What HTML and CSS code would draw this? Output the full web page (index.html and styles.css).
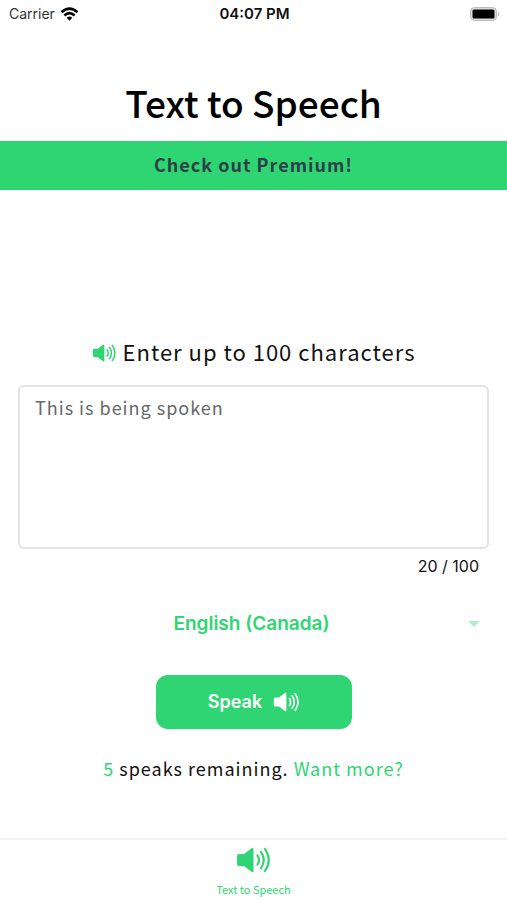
FILE: index.html
```html
<!DOCTYPE html>
<html lang="en">
<head>
<meta charset="utf-8">
<meta name="viewport" content="width=device-width, initial-scale=1">
<title>Text to Speech</title>
<link rel="stylesheet" href="styles.css">
</head>
<body>
<svg class="sprite" aria-hidden="true">
  <symbol id="speaker" viewBox="0 0 34 26">
    <path fill="currentColor" d="M3 7h5L15.500 1.200Q17.500 0 17.500 2.500v21Q17.500 26 15.500 24.800L8 19H3Q1 19 1 17v-8Q1 7 3 7z"/>
    <path fill="none" stroke="currentColor" stroke-width="2.200" stroke-linecap="round" d="M21.500 8.500q3 4.500 0 9M25 5q5.500 8 0 16M29 2q7.500 11 0 22"/>
  </symbol>
</svg>
<div class="app">
  <header class="status">
    <span class="carrier">Carrier
      <svg class="wifi" viewBox="0 0 18 14" aria-hidden="true">
        <path fill="none" stroke="#000" stroke-width="2.600" d="M1 5.200q8-7 16 0M3.900 8.400q5.100-4.400 10.200 0"/>
        <path d="M6.200 10.800q2.800-2.400 5.600 0L9 13.800z"/>
      </svg>
    </span>
    <span class="clock">04:07 PM</span>
    <svg class="battery" viewBox="0 0 30 14" aria-hidden="true">
      <rect x="0.500" y="0.500" width="26" height="13" rx="4" fill="#ddd" stroke="#bbb"/>
      <rect x="2.500" y="2.500" width="22" height="9" rx="1.500"/>
      <path fill="#bbb" d="M28 4.500q3 2.500 0 5z"/>
    </svg>
  </header>
  <h1 class="title">Text to Speech</h1>
  <a class="banner" href="#premium">Check out Premium!</a>
  <main class="content">
    <label class="prompt" for="message"><svg class="prompt-icon" aria-hidden="true"><use href="#speaker"/></svg>Enter up to 100 characters</label>
    <textarea class="message" id="message" maxlength="100" placeholder="This is being spoken"></textarea>
    <p class="count">20 / 100</p>
    <div class="language">
      <select class="language-select" aria-label="Language"><option>English (Canada)</option></select>
    </div>
    <button class="speak" type="button">Speak <svg class="speak-icon" aria-hidden="true"><use href="#speaker"/></svg></button>
    <p class="remaining"><span class="accent">5</span> speaks remaining. <a class="accent" href="#more">Want more?</a></p>
  </main>
  <nav class="tabs">
    <a class="tab" href="#tts"><svg class="tab-icon" aria-hidden="true"><use href="#speaker"/></svg>Text to Speech</a>
  </nav>
</div>
</body>
</html>
```

FILE: styles.css
```css
* { box-sizing: border-box; }

body {
  margin: 0;
  background: #fff;
  color: #111;
  font-family: "Noto Sans CJK SC", sans-serif;
}

.sprite { position: absolute; width: 0; height: 0; }

.app {
  display: flex;
  flex-direction: column;
  min-height: 100vh;
}

.status {
  display: grid;
  grid-template-columns: 1fr auto 1fr;
  align-items: center;
  height: 28px;
  padding: 0 7px 0 9px;
  font: 15px/20px Inter, sans-serif;
}

.carrier {
  display: flex;
  align-items: center;
  gap: 5px;
  color: #333;
  font-size: 14px;
}

.wifi { width: 19px; height: 14px; }
.clock { font-weight: 600; }
.battery { width: 30px; height: 14px; justify-self: end; }

.title {
  margin: 44px 0 9px;
  font-size: 37px;
  line-height: 60px;
  font-weight: 500;
  text-align: center;
  color: #000;
}

.banner {
  padding: 11px 12px 13px;
  background: #2fd573;
  color: #2b4147;
  font-size: 18px;
  line-height: 25px;
  font-weight: 700;
  letter-spacing: 1px;
  text-align: center;
  text-decoration: none;
}

.content {
  display: flex;
  flex: 1;
  flex-direction: column;
  align-items: center;
  padding: 143px 18px 0;
}

.prompt {
  display: flex;
  align-items: center;
  gap: 7px;
  font-size: 22px;
  line-height: 36px;
  letter-spacing: 1px;
}

.prompt-icon { width: 24px; height: 18px; margin-top: 4px; color: #2fd573; }

.message {
  display: block;
  width: 100%;
  height: 164px;
  margin-top: 16px;
  padding: 7px 15px;
  border: 2px solid #e2e3e4;
  border-radius: 6px;
  background: #fff;
  font: 18px/27px "Noto Sans CJK SC", sans-serif;
  letter-spacing: 1px;
  resize: none;
}

.message::placeholder { color: #66696c; opacity: 1; }

.count {
  align-self: flex-end;
  margin: 6px 10px 0;
  font: 16px/22px Inter, sans-serif;
}

.language {
  position: relative;
  width: 100%;
  margin-top: 32px;
}

.language::after {
  content: "";
  position: absolute;
  top: 12px;
  right: 9px;
  border: 6px solid transparent;
  border-top-color: #aeebc9;
  border-bottom: 0;
  pointer-events: none;
}

.language-select {
  width: 100%;
  height: 30px;
  padding: 0 4px 0 0;
  border: 0;
  appearance: none;
  background: transparent;
  color: #2fd573;
  font: 600 19px/30px Inter, sans-serif;
  text-align: center;
  text-align-last: center;
}

.speak {
  display: flex;
  align-items: center;
  justify-content: center;
  gap: 11px;
  width: 196px;
  height: 54px;
  margin-top: 36px;
  border: 0;
  border-radius: 12px;
  background: #2fd573;
  color: #fff;
  font: 600 18px/28px Inter, sans-serif;
}

.speak-icon { width: 26px; height: 20px; }

.remaining {
  margin: 26px 0 0;
  font-size: 18px;
  line-height: 27px;
  letter-spacing: 1px;
}

.accent { color: #2fd573; text-decoration: none; }

.tabs {
  display: flex;
  justify-content: center;
  height: 62px;
  border-top: 2px solid #f1f1f1;
}

.tab {
  display: flex;
  flex-direction: column;
  align-items: center;
  padding-top: 7px;
  gap: 8px;
  color: #2fd573;
  font-size: 11px;
  line-height: 16px;
  text-decoration: none;
}

.tab-icon { width: 34px; height: 26px; }
```
